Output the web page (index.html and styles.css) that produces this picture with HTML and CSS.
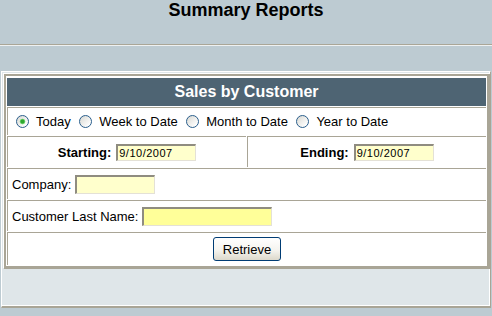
FILE: index.html
```html
<!DOCTYPE html>
<html lang="en">
<head>
  <meta charset="UTF-8" />
  <title>Summary Reports</title>
  <link rel="stylesheet" href="styles.css">
</head>
<body>
  <div class="page-head">
    <h1>Summary Reports</h1>
  </div>

  <div class="panel">
    <form class="report">
      <div class="report-title">Sales by Customer</div>

      <div class="cell periods">
        <label><input type="radio" name="period" value="today" checked>Today</label>
        <label><input type="radio" name="period" value="week">Week to Date</label>
        <label><input type="radio" name="period" value="month">Month to Date</label>
        <label><input type="radio" name="period" value="year">Year to Date</label>
      </div>

      <div class="split">
        <div class="cell date-cell">
          <label for="start">Starting:</label>
          <input type="text" id="start" class="date-input" value="9/10/2007">
        </div>
        <div class="cell date-cell">
          <label for="end">Ending:</label>
          <input type="text" id="end" class="date-input" value="9/10/2007">
        </div>
      </div>

      <div class="cell field-row">
        <label for="company">Company:</label>
        <input type="text" id="company" class="field company">
      </div>

      <div class="cell field-row">
        <label for="lastname">Customer Last Name:</label>
        <input type="text" id="lastname" class="field lastname">
      </div>

      <div class="cell actions">
        <button type="submit">Retrieve</button>
      </div>
    </form>
  </div>
</body>
</html>
```

FILE: styles.css
```css
body {
  font-family: "Liberation Sans", Arial, sans-serif;
  background-color: #bdcbd2;
  margin: 0;
  padding: 0;
}

.page-head {
  height: 44px;
  border-bottom: 1px solid #aaa697;
  box-shadow: 0 1px 0 #eef1f2;
}

h1 {
  margin: 0;
  font-size: 18px;
  line-height: 20px;
  text-align: center;
}

.panel {
  margin: 26px 1px 0 1px;
  padding: 0 0 37px 0;
  background-color: #dfe6e9;
  border-style: solid;
  border-width: 1px 1px 2px 1px;
  border-color: #fff #a9a596 #a9a596 #fff;
  box-shadow: inset -1px -1px 0 #fff;
}

.report {
  display: flex;
  flex-direction: column;
  gap: 1px;
  margin: 2px 0 0 2px;
  padding: 2px 1px 1px 1px;
  background-color: white;
  border-style: solid;
  border-width: 2px 3px 3px 2px;
  border-color: #a9a596;
  box-shadow: -1px -1px 0 #fff;
}

.report-title {
  height: 28px;
  line-height: 28px;
  background-color: #4e6473;
  color: white;
  font-size: 16px;
  font-weight: bold;
  text-align: center;
}

.cell {
  box-sizing: border-box;
  border-top: 1px solid #a9a596;
  border-left: 1px solid #a9a596;
  display: flex;
  align-items: center;
  font-size: 13px;
}

.periods {
  height: 28px;
  padding-left: 8px;
  line-height: 15px;
}

.periods label {
  display: flex;
  align-items: center;
  margin-right: 8.5px;
}

.periods input[type="radio"] {
  appearance: none;
  width: 13px;
  height: 13px;
  margin: 0 7px 0 0;
  border: 1px solid #2a5e8c;
  border-radius: 50%;
  background: linear-gradient(135deg, #d8d8d2, #fff 85%);
}

.periods input[type="radio"]:checked {
  background:
    radial-gradient(circle, #2ea82e 0 1.6px, #7ad67a 2.4px, transparent 3.2px),
    linear-gradient(135deg, #d8d8d2, #fff 85%);
}

.split {
  display: grid;
  grid-template-columns: 1fr 1fr;
  gap: 1px;
}

.date-cell {
  height: 31px;
  justify-content: center;
}

.date-cell label {
  font-weight: bold;
  margin-right: 5px;
}

input[type="text"] {
  box-sizing: border-box;
  margin: 0;
  font-family: "Liberation Sans", Arial, sans-serif;
  border-style: solid;
  border-width: 2px 1px 1px 2px;
  border-color: #8f8c80 #e4e1d6 #e4e1d6 #8f8c80;
  outline: none;
}

.date-input {
  width: 80px;
  height: 17px;
  padding: 0 0 0 1px;
  font-size: 11px;
  letter-spacing: 0.5px;
  background-color: #ffffcc;
}

.field-row {
  height: 31px;
  padding-left: 4px;
}

.field-row label {
  margin-right: 4px;
}

.field {
  height: 19px;
  font-size: 12px;
}

.company {
  width: 80px;
  background-color: #ffffcc;
}

.lastname {
  width: 130px;
  background-color: #ffff99;
}

.actions {
  height: 33px;
  justify-content: center;
}

button {
  width: 68px;
  height: 24px;
  padding: 0;
  font-family: "Liberation Sans", Arial, sans-serif;
  font-size: 13px;
  color: black;
  border: 1px solid #003c74;
  border-radius: 3px;
  background: linear-gradient(#ffffff, #f5f4ef 55%, #dcd8cb);
  cursor: pointer;
}
```
